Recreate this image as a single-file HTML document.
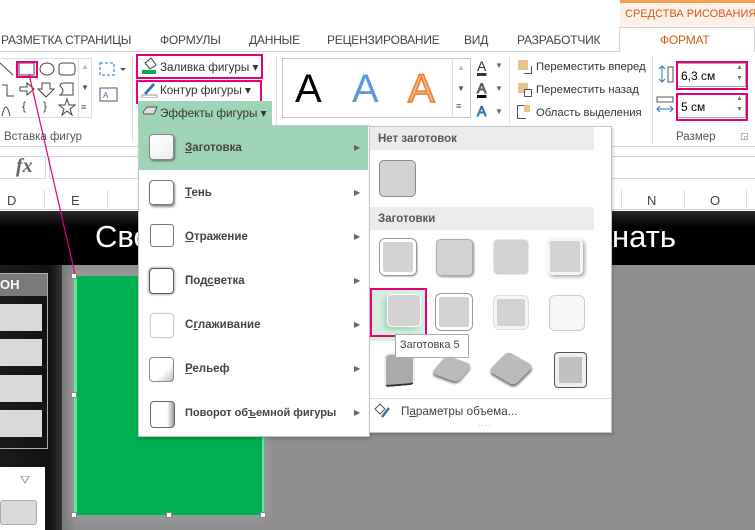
<!DOCTYPE html>
<html><head><meta charset="utf-8"><style>
*{margin:0;padding:0;box-sizing:border-box}
body{width:755px;height:530px;overflow:hidden;position:relative;background:#fff;font-family:"Liberation Sans","DejaVu Sans",sans-serif;font-size:12px;color:#333}
.a{position:absolute}
.t{position:absolute;white-space:nowrap}
.tab{position:absolute;white-space:nowrap;top:33px;font-size:12px;color:#444;letter-spacing:-0.2px}
.pink{position:absolute;border:2px solid #e6007e}
.sq{position:absolute;background:#d2d2d2;border-radius:5px}
.mi{position:absolute;white-space:nowrap;font-size:11.5px;font-weight:bold;color:#444}
.ar{position:absolute;font-size:8px;color:#666}
.rb{position:absolute;white-space:nowrap;font-size:11.7px;color:#333}
</style></head><body>
<!-- top tabs -->
<div class="a" style="left:620px;top:0;width:135px;height:27px;background:#fdf0e6;border-top:3px solid #f0a050"></div>
<div class="t" style="left:625px;top:8px;color:#d35b1c;font-size:11px">СРЕДСТВА РИСОВАНИЯ</div>
<div class="a" style="left:0;top:51px;width:755px;height:1px;background:#d4d4d4"></div>
<div class="a" style="left:619px;top:27px;width:136px;height:25px;background:#fff;border:1px solid #d4d4d4;border-bottom:none"></div>
<div class="tab" style="left:1px">РАЗМЕТКА СТРАНИЦЫ</div>
<div class="tab" style="left:160px">ФОРМУЛЫ</div>
<div class="tab" style="left:249px">ДАННЫЕ</div>
<div class="tab" style="left:327px">РЕЦЕНЗИРОВАНИЕ</div>
<div class="tab" style="left:464px">ВИД</div>
<div class="tab" style="left:517px">РАЗРАБОТЧИК</div>
<div class="tab" style="left:660px;color:#d35b1c">ФОРМАТ</div>
<!-- ribbon -->
<div class="a" style="left:0;top:146px;width:755px;height:1px;background:#d4d4d4"></div>
<div class="a" style="left:0;top:58px;width:92px;height:60px;border:1px solid #ddd;border-left:none"></div>
<div class="a" style="left:78px;top:58px;width:14px;height:60px;border-left:1px solid #ddd"></div>
<div class="t" style="left:81px;top:62px;font-size:8px;color:#bbb">▲</div>
<div class="t" style="left:81px;top:83px;font-size:8px;color:#555">▼</div>
<div class="t" style="left:81px;top:102px;font-size:9px;color:#555">≡</div>
<svg class="a" style="left:0;top:58px" width="78" height="60" viewBox="0 0 78 60" fill="none" stroke="#444" stroke-width="1">
<path d="M0 5 L13 17"/><rect x="19" y="5" width="15" height="12"/><ellipse cx="47" cy="11" rx="7" ry="6"/><rect x="59" y="5" width="16" height="12" rx="3"/>
<path d="M2 27 H7 V38 H14"/><path d="M20 29 H27 V25 L34 31 L27 37 V33 H20Z"/><path d="M42 25 H50 V31 H54 L46 39 L38 31 H42Z"/><path d="M60 28 Q60 25 64 25 H73 V37 H60 Q66 33 60 28Z"/>
<path d="M2 58 Q6 40 10 58" /><text x="22" y="52" font-size="12" fill="#444" stroke="none">{</text><text x="43" y="52" font-size="12" fill="#444" stroke="none">}</text><path d="M67 41 L69 47 L75 47 L70 51 L72 57 L67 53 L62 57 L64 51 L59 47 L65 47Z"/>
</svg>
<div class="pink" style="left:16px;top:61px;width:22px;height:17px"></div>
<svg class="a" style="left:98px;top:60px" width="30" height="60" fill="none"><rect x="2" y="3" width="14" height="12" stroke="#2e75b6" stroke-dasharray="3 2"/><path d="M22 8 l3 3 l3 -3z" fill="#555"/><rect x="2" y="28" width="17" height="13" stroke="#555"/><text x="5" y="38" font-size="8" fill="#2e75b6">A</text></svg>
<div class="t" style="left:4px;top:131px;font-size:11.5px;color:#555">Вставка фигур</div>
<div class="a" style="left:132px;top:56px;width:1px;height:86px;background:#e0e0e0"></div>
<svg class="a" style="left:141px;top:57px" width="18" height="18"><path d="M4 6 L10 1 L15 8 L9 12Z" fill="none" stroke="#444"/><rect x="1" y="13" width="14" height="4" fill="#00b050"/></svg>
<div class="rb" style="left:160px;top:60px">Заливка фигуры ▾</div>
<div class="pink" style="left:136px;top:54px;width:127px;height:25px"></div>
<svg class="a" style="left:141px;top:80px" width="18" height="18"><path d="M3 13 L12 3 L14 5 L5 15Z" fill="#2e75b6"/><rect x="1" y="15" width="15" height="3" fill="none" stroke="#999"/></svg>
<div class="rb" style="left:160px;top:83px">Контур фигуры ▾</div>
<div class="pink" style="left:136px;top:80px;width:126px;height:24px"></div>
<div class="a" style="left:138px;top:101px;width:134px;height:24px;background:#9fd5b7"></div>
<svg class="a" style="left:141px;top:105px" width="18" height="14"><path d="M2 7 L6 2 H16 L13 9 H3Z" fill="#ddd" stroke="#555"/></svg>
<div class="rb" style="left:160px;top:106px">Эффекты фигуры ▾</div>
<div class="a" style="left:276px;top:56px;width:1px;height:86px;background:#e0e0e0"></div>
<div class="a" style="left:282px;top:58px;width:189px;height:60px;border:1px solid #c6c6c6"></div>
<div class="a" style="left:452px;top:58px;width:19px;height:60px;border-left:1px solid #ddd"></div>
<div class="t" style="left:457px;top:63px;font-size:8px;color:#bbb">▲</div>
<div class="t" style="left:457px;top:84px;font-size:8px;color:#555">▼</div>
<div class="t" style="left:456px;top:101px;font-size:9px;color:#555">≡</div>
<div class="t" style="left:295px;top:66px;font-size:40px;color:#000;line-height:46px">A</div>
<div class="t" style="left:352px;top:66px;font-size:40px;color:#5b9bd5;line-height:46px">A</div>
<div class="t" style="left:408px;top:66px;font-size:40px;color:#f4b183;line-height:46px;-webkit-text-stroke:1.5px #ed7d31">A</div>
<div class="t" style="left:477px;top:58px;font-size:14px;color:#333;text-decoration:underline;text-decoration-thickness:3px">A</div><div class="t" style="left:495px;top:61px;font-size:8px;color:#666">▼</div>
<div class="t" style="left:477px;top:80px;font-size:14px;color:#fff;-webkit-text-stroke:1px #555;text-decoration:underline #000;text-decoration-thickness:3px">A</div><div class="t" style="left:495px;top:84px;font-size:8px;color:#666">▼</div>
<div class="t" style="left:477px;top:103px;font-size:14px;color:#bdd7ee;-webkit-text-stroke:1px #2e75b6">A</div><div class="t" style="left:495px;top:107px;font-size:8px;color:#666">▼</div>
<div class="a" style="left:509px;top:56px;width:1px;height:70px;background:#e0e0e0"></div>
<div class="a" style="left:518px;top:60px;width:10px;height:10px;background:#e8c38a"></div><div class="a" style="left:524px;top:66px;width:8px;height:8px;border:1px solid #555;border-left:none;border-top:none"></div>
<div class="rb" style="left:536px;top:61px;font-size:11.3px">Переместить вперед</div>
<div class="a" style="left:518px;top:83px;width:10px;height:10px;background:#e8c38a"></div><div class="a" style="left:524px;top:89px;width:8px;height:8px;border:1px solid #555;background:#fff"></div>
<div class="rb" style="left:536px;top:84px;font-size:11.3px">Переместить назад</div>
<div class="a" style="left:517px;top:105px;width:9px;height:14px;border:1px solid #555;border-right:none"></div><div class="a" style="left:524px;top:105px;width:6px;height:7px;background:#e8c38a"></div>
<div class="rb" style="left:536px;top:107px;font-size:11.3px">Область выделения</div>
<div class="a" style="left:652px;top:56px;width:1px;height:88px;background:#e0e0e0"></div>
<svg class="a" style="left:656px;top:64px" width="20" height="60"><path d="M6 2 V18 M3 5 L6 2 L9 5 M3 15 L6 18 L9 15" stroke="#2e75b6" fill="none"/><rect x="12" y="3" width="5" height="15" fill="none" stroke="#555"/><rect x="1" y="33" width="16" height="5" fill="none" stroke="#555"/><path d="M1 45 H17 M4 42 L1 45 L4 48 M14 42 L17 45 L14 48" stroke="#2e75b6" fill="none"/></svg>
<div class="a" style="left:677px;top:63px;width:69px;height:24px;border:1px solid #aaa"></div>
<div class="t" style="left:681px;top:69px;font-size:12px;color:#000">6,3 см</div>
<div class="t" style="left:736px;top:62px;font-size:7px;color:#777;line-height:11px">▲<br>▼</div>
<div class="pink" style="left:676px;top:61px;width:72px;height:29px"></div>
<div class="a" style="left:677px;top:94px;width:69px;height:24px;border:1px solid #aaa"></div>
<div class="t" style="left:681px;top:100px;font-size:12px;color:#000">5 см</div>
<div class="t" style="left:736px;top:93px;font-size:7px;color:#777;line-height:11px">▲<br>▼</div>
<div class="pink" style="left:676px;top:93px;width:72px;height:28px"></div>
<div class="t" style="left:676px;top:131px;font-size:11.5px;color:#555">Размер</div>
<div class="t" style="left:740px;top:131px;font-size:9px;color:#777">◲</div>
<!-- formula bar -->
<div class="a" style="left:0;top:147px;width:755px;height:38px;background:#fff"></div>
<div class="a" style="left:-2px;top:156px;width:48px;height:23px;border:1px solid #d4d4d4"></div>
<div class="t" style="left:16px;top:155px;font-size:20px;font-style:italic;font-family:'Liberation Serif',serif;color:#666;font-weight:bold">fx</div>
<div class="a" style="left:49px;top:156px;width:720px;height:23px;border:1px solid #d4d4d4"></div>
<!-- column headers -->
<div class="a" style="left:0;top:188px;width:755px;height:22px;background:#fff;border-bottom:1px solid #ccc"></div>
<div class="a" style="left:44px;top:190px;width:1px;height:20px;background:#ddd"></div>
<div class="a" style="left:107px;top:190px;width:1px;height:20px;background:#ddd"></div>
<div class="a" style="left:621px;top:190px;width:1px;height:20px;background:#ddd"></div>
<div class="a" style="left:684px;top:190px;width:1px;height:20px;background:#ddd"></div>
<div class="a" style="left:746px;top:190px;width:1px;height:20px;background:#ddd"></div>
<div class="t" style="left:7px;top:193px;font-size:13px;color:#444">D</div>
<div class="t" style="left:71px;top:193px;font-size:13px;color:#444">E</div>
<div class="t" style="left:647px;top:193px;font-size:13px;color:#444">N</div>
<div class="t" style="left:710px;top:193px;font-size:13px;color:#444">O</div>
<!-- sheet -->
<div class="a" style="left:0;top:211px;width:755px;height:319px;background:#8f8f8f"></div>
<div class="a" style="left:0;top:211px;width:755px;height:54px;background:linear-gradient(#2a2a2a,#000 30%,#000)"></div>
<div class="t" style="left:95px;top:219px;font-size:31px;color:#fff">Сво</div>
<div class="t" style="left:612px;top:219px;font-size:31px;color:#fff">нать</div>
<div class="a" style="left:0;top:265px;width:62px;height:265px;background:linear-gradient(90deg,#1b1b1b,#111 80%,#333)"></div>
<div class="a" style="left:62px;top:265px;width:14px;height:265px;background:linear-gradient(90deg,#777,#8f8f8f)"></div>
<div class="a" style="left:0;top:273px;width:48px;height:176px;border:1px solid #aaa;border-left:none"></div>
<div class="a" style="left:0;top:274px;width:47px;height:22px;background:#7a7a7a"></div>
<div class="t" style="left:0;top:277px;font-size:13px;color:#fff;font-weight:bold">ОН</div>
<div class="a" style="left:0;top:304px;width:42px;height:27px;background:#d9d9d9"></div>
<div class="a" style="left:0;top:339px;width:42px;height:27px;background:#d9d9d9"></div>
<div class="a" style="left:0;top:375px;width:42px;height:27px;background:#d9d9d9"></div>
<div class="a" style="left:0;top:410px;width:42px;height:27px;background:#d9d9d9"></div>
<div class="a" style="left:0;top:467px;width:45px;height:63px;background:#fff"></div>
<div class="t" style="left:20px;top:473px;font-size:12px;color:#999">⛛</div>
<div class="a" style="left:0;top:500px;width:37px;height:25px;background:#d9d9d9;border:1px solid #aaa;border-radius:3px"></div>
<!-- green shape -->
<div class="a" style="left:74px;top:276px;width:190px;height:239px;background:#00b050;border-left:3px solid #5ee89a;border-right:2px solid #5ee89a;box-shadow:0 0 10px 3px rgba(170,170,170,.6)"></div>
<div class="a" style="left:71px;top:273px;width:6px;height:6px;background:#fff;border:1px solid #888"></div>
<div class="a" style="left:71px;top:392px;width:6px;height:6px;background:#fff;border:1px solid #888"></div>
<div class="a" style="left:71px;top:512px;width:6px;height:6px;background:#fff;border:1px solid #888"></div>
<div class="a" style="left:166px;top:512px;width:6px;height:6px;background:#fff;border:1px solid #888"></div>
<div class="a" style="left:260px;top:512px;width:6px;height:6px;background:#fff;border:1px solid #888"></div>
<svg class="a" style="left:0;top:0" width="755" height="530"><line x1="29" y1="74" x2="75" y2="274" stroke="#e6007e" stroke-width="1.2"/></svg>
<!-- menu 1 -->
<div class="a" style="left:138px;top:125px;width:232px;height:312px;background:#fff;border:1px solid #c6c6c6;box-shadow:1px 2px 3px rgba(0,0,0,.2)"></div>
<div class="a" style="left:139px;top:126px;width:229px;height:44px;background:#9fd5b7"></div>
<div class="a" style="left:149px;top:134px;width:25px;height:26px;background:linear-gradient(135deg,#fff,#eee);border:1px solid #888;border-radius:4px;box-shadow:1px 1px 2px #666"></div>
<div class="mi" style="left:185px;top:142px"><u>З</u>аготовка</div>
<div class="ar" style="left:354px;top:143px">▶</div>
<div class="a" style="left:149px;top:180px;width:25px;height:25px;background:#fff;border:1px solid #777;border-radius:4px;box-shadow:1px 2px 2px #888"></div>
<div class="mi" style="left:185px;top:187px"><u>Т</u>ень</div>
<div class="ar" style="left:354px;top:188px">▶</div>
<div class="a" style="left:150px;top:224px;width:24px;height:23px;background:#fff;border:1px solid #777;border-radius:3px"></div>
<div class="mi" style="left:185px;top:231px"><u>О</u>тражение</div>
<div class="ar" style="left:354px;top:232px">▶</div>
<div class="a" style="left:149px;top:268px;width:25px;height:26px;background:#fff;border:1px solid #555;border-radius:4px;box-shadow:0 0 2px 1px #bbb"></div>
<div class="mi" style="left:185px;top:275px">Под<u>с</u>ветка</div>
<div class="ar" style="left:354px;top:276px">▶</div>
<div class="a" style="left:150px;top:313px;width:24px;height:25px;background:#fff;border:1px solid #ccc;border-radius:4px;box-shadow:0 0 2px #ddd"></div>
<div class="mi" style="left:185px;top:319px">С<u>г</u>лаживание</div>
<div class="ar" style="left:354px;top:320px">▶</div>
<div class="a" style="left:149px;top:357px;width:25px;height:25px;background:linear-gradient(135deg,#fff 60%,#bbb);border:1px solid #888;border-radius:4px"></div>
<div class="mi" style="left:185px;top:363px"><u>Р</u>ельеф</div>
<div class="ar" style="left:354px;top:364px">▶</div>
<div class="a" style="left:150px;top:401px;width:25px;height:27px;background:linear-gradient(90deg,#fff 70%,#999);border:1px solid #666;border-radius:4px"></div>
<div class="mi" style="left:185px;top:407px;font-size:11px">Поворот об<u>ъ</u>емной фигуры</div>
<div class="ar" style="left:354px;top:408px">▶</div>
<!-- submenu -->
<div class="a" style="left:369px;top:126px;width:243px;height:307px;background:#fff;border:1px solid #c6c6c6;box-shadow:1px 2px 3px rgba(0,0,0,.2)"></div>
<div class="a" style="left:370px;top:127px;width:224px;height:23px;background:#ececec"></div>
<div class="t" style="left:378px;top:133px;font-size:11.5px;font-weight:bold;color:#555">Нет заготовок</div>
<div class="sq" style="left:379px;top:160px;width:37px;height:37px;border:1px solid #888"></div>
<div class="a" style="left:370px;top:207px;width:224px;height:23px;background:#ececec"></div>
<div class="t" style="left:378px;top:213px;font-size:11.5px;font-weight:bold;color:#555">Заготовки</div>
<div class="sq" style="left:380px;top:239px;width:36px;height:36px;border:3px solid #fff;box-shadow:0 0 0 1px #999,1px 1px 2px #777"></div>
<div class="sq" style="left:436px;top:239px;width:37px;height:37px;border:1px solid #aaa;box-shadow:1px 1px 2px #888"></div>
<div class="sq" style="left:493px;top:239px;width:36px;height:36px;border:1px solid #e8e8e8"></div>
<div class="sq" style="left:547px;top:238px;width:36px;height:37px;border:3px solid #f5f5f5;box-shadow:2px 2px 3px #aaa"></div>
<div class="a" style="left:370px;top:288px;width:57px;height:53px;background:#d5eee0"></div>
<div class="sq" style="left:387px;top:294px;width:34px;height:33px;border:1px solid #fff;box-shadow:-3px 3px 5px #9fd5b7"></div>
<div class="pink" style="left:370px;top:288px;width:57px;height:49px"></div>
<div class="sq" style="left:436px;top:294px;width:36px;height:36px;border:3px solid #fff;box-shadow:0 0 0 1px #999"></div>
<div class="sq" style="left:494px;top:296px;width:34px;height:33px;border:3px solid #f5f5f5;box-shadow:0 0 0 1px #ddd"></div>
<div class="a" style="left:549px;top:295px;width:36px;height:36px;background:#f6f6f6;border:1px solid #ccc;border-radius:6px"></div>
<div class="sq" style="left:384px;top:352px;width:31px;height:34px;background:#aaa;border:2px solid #eee;border-bottom:2px solid #333;transform:skewY(-5deg)"></div>
<div class="sq" style="left:438px;top:358px;width:28px;height:22px;background:#bbb;transform:rotate(20deg) skewX(-20deg);box-shadow:1px 2px 2px #777"></div>
<div class="sq" style="left:496px;top:355px;width:30px;height:27px;background:#bbb;transform:rotate(30deg) skewX(-15deg);box-shadow:2px 2px 2px #777"></div>
<div class="a" style="left:555px;top:353px;width:31px;height:34px;background:#c0c0c0;border:4px solid #eee;box-shadow:0 0 0 1px #555;border-radius:3px"></div>
<div class="a" style="left:395px;top:334px;width:74px;height:24px;background:#fff;border:1px solid #aaa"></div>
<div class="t" style="left:400px;top:339px;font-size:11px;color:#444">Заготовка 5</div>
<div class="a" style="left:370px;top:398px;width:241px;height:1px;background:#ddd"></div>
<svg class="a" style="left:373px;top:403px" width="18" height="16"><path d="M2 6 L7 1 L12 6 L7 11Z" fill="none" stroke="#555"/><path d="M9 14 L16 5" stroke="#2e75b6" stroke-width="2.5"/></svg>
<div class="t" style="left:401px;top:405px;font-size:11.7px;color:#444">П<u>а</u>раметры объема...</div>
<div class="t" style="left:478px;top:418px;font-size:9px;color:#aaa;letter-spacing:1px">....</div>
</body></html>
